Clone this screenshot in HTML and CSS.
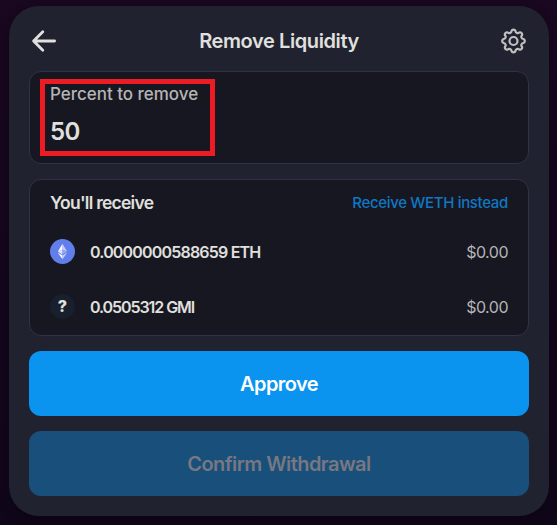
FILE: index.html
```html
<!DOCTYPE html>
<html lang="en">
<head>
<meta charset="utf-8">
<title>Remove Liquidity</title>
<link rel="stylesheet" href="styles.css">
</head>
<body>
<main class="card">
  <header class="header">
    <svg class="back" width="26" height="24" viewBox="0 0 26 24"><path d="M11.800 2.800 2.600 12l9.200 9.200M3 12H23.600"/></svg>
    <h1 class="title">Remove Liquidity</h1>
    <svg class="gear" width="26" height="26" viewBox="-12.500 -13 26 26">
      <path d="M-1.990-10A2.150 2.150 0 0 1 1.990-10A2.150 2.150 0 0 0 5.670-8.480A2.150 2.150 0 0 1 8.480-5.670A2.150 2.150 0 0 0 10-1.990A2.150 2.150 0 0 1 10 1.990A2.150 2.150 0 0 0 8.480 5.670A2.150 2.150 0 0 1 5.670 8.480A2.150 2.150 0 0 0 1.990 10A2.150 2.150 0 0 1-1.990 10A2.150 2.150 0 0 0-5.670 8.480A2.150 2.150 0 0 1-8.480 5.670A2.150 2.150 0 0 0-10 1.990A2.150 2.150 0 0 1-10-1.990A2.150 2.150 0 0 0-8.480-5.670A2.150 2.150 0 0 1-5.670-8.480A2.150 2.150 0 0 0-1.990-10Z"/>
      <circle r="4"/>
    </svg>
  </header>
  <section class="panel percent">
    <div class="label">Percent to remove</div>
    <div class="value">50</div>
    <div class="highlight"></div>
  </section>
  <section class="panel receive">
    <div class="row heading">
      <h2 class="subtitle">You'll receive</h2>
      <a class="link">Receive WETH instead</a>
    </div>
    <div class="row token">
      <svg class="coin" width="25" height="25" viewBox="0 0 25 25">
        <circle cx="12.500" cy="12.500" r="12.500" fill="#627eea"/>
        <path d="M12.500 4.700 7.800 12.700l4.700-2.100z" fill="#fff"/>
        <path d="M12.500 4.700v5.900l4.700 2.100z" fill="#c5d0f8"/>
        <path d="M7.800 12.700l4.700 2.800v-4.900z" fill="#dce3fb"/>
        <path d="M12.500 10.600v4.900l4.700-2.800z" fill="#91a5f1"/>
        <path d="M7.800 13.700l4.700 6.500v-3.700z" fill="#fff"/>
        <path d="M12.500 20.200v-3.700l4.700-2.800z" fill="#c5d0f8"/>
      </svg>
      <span class="amount eth">0.0000000588659 ETH</span>
      <span class="price">$0.00</span>
    </div>
    <div class="row token">
      <span class="coin unknown">?</span>
      <span class="amount gmi">0.0505312 GMI</span>
      <span class="price">$0.00</span>
    </div>
  </section>
  <button class="button approve">Approve</button>
  <button class="button confirm">Confirm Withdrawal</button>
</main>
</body>
</html>
```
FILE: styles.css
```css
* { box-sizing: border-box; }
body {
  margin: 0;
  height: 525px;
  padding: 6px 8px 9px 9px;
  overflow: hidden;
  background: linear-gradient(#1a0720, #10061a);
  font-family: Inter, "Liberation Sans", sans-serif;
  color: #e0e0df;
}
.card {
  display: flex;
  flex-direction: column;
  gap: 15px;
  height: 510px;
  padding: 20px;
  border-radius: 30px;
  background: #212230;
  box-shadow: 0 4px 12px rgba(0, 0, 0, .35);
}
.header {
  display: flex;
  justify-content: space-between;
  align-items: center;
  height: 30px;
  padding: 0 2px;
}
.back, .gear {
  fill: none;
  stroke-linecap: round;
  stroke-linejoin: round;
}
.back { stroke: #e0e0df; stroke-width: 2.8; }
.gear { stroke: #c0c0c0; stroke-width: 2.2; }
.title {
  margin: 0;
  font-size: 20px;
  font-weight: 600;
  letter-spacing: -.4px;
}
.panel {
  flex: none;
  border: 1px solid #303247;
  border-radius: 12px;
  background: #171721;
  padding: 0 20px;
}
.percent {
  position: relative;
  height: 93px;
  padding-top: 10px;
}
.label {
  line-height: 24px;
  font-size: 17px;
  font-weight: 550;
  letter-spacing: -.02px;
  color: #b5b5b5;
}
.value {
  margin-top: 10px;
  line-height: 32px;
  font-size: 24px;
  font-weight: 600;
  letter-spacing: -.5px;
}
.highlight {
  position: absolute;
  left: 10px;
  top: 7px;
  width: 175px;
  height: 77px;
  border: 5px solid #ed1c24;
}
.receive { height: 157px; }
.row { display: flex; align-items: center; }
.heading { justify-content: space-between; height: 44px; }
.subtitle {
  margin: 0;
  font-size: 17.5px;
  font-weight: 600;
  letter-spacing: -.75px;
}
.link {
  font-size: 15px;
  font-weight: 450;
  letter-spacing: -.33px;
  color: #1078c2;
}
.token { height: 55px; }
.coin {
  flex: none;
  width: 25px;
  height: 25px;
  margin-right: 15px;
}
.unknown {
  border-radius: 50%;
  background: #18202d;
  text-align: center;
  line-height: 25px;
  font-size: 16px;
  font-weight: 800;
}
.amount {
  font-size: 16px;
  font-weight: 600;
}
.eth { letter-spacing: -.82px; }
.gmi { letter-spacing: -1.08px; }
.price {
  margin-left: auto;
  font-size: 16px;
  letter-spacing: -.5px;
  color: #b5b5b5;
}
.button {
  flex: none;
  height: 65px;
  border: 0;
  border-radius: 12px;
  padding: 0;
  font: 600 20px Inter, "Liberation Sans", sans-serif;
  letter-spacing: -.57px;
}
.approve { background: #0a93ef; color: #fff; }
.confirm { background: #184f7b; color: #777882; }
```
